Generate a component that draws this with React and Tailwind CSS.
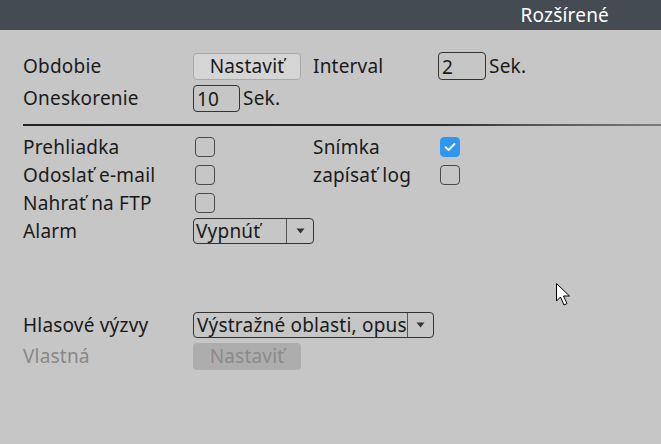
import React from "react";

const Check = ({ checked }) => (
  <div
    className={
      "w-[20px] h-[20px] rounded-[4px] flex items-center justify-center " +
      (checked ? "bg-[#2f97ef] border border-[#2f97ef]" : "border border-[#4a4a4a]")
    }
  >
    {checked && (
      <svg width="12" height="10" viewBox="0 0 12 10">
        <path d="M1.5 5.2 L4.6 8 L10.5 2" fill="none" stroke="white" strokeWidth="1.8" strokeLinecap="round" strokeLinejoin="round" />
      </svg>
    )}
  </div>
);

const Arrow = () => (
  <svg width="9" height="6" viewBox="0 0 9 6">
    <path d="M0.5 0.5 L8.5 0.5 L4.5 5.5 Z" fill="#333" />
  </svg>
);

const Row = ({ children, className = "" }) => (
  <div className={"grid grid-cols-[170px_120px_125px_1fr] items-center h-[28px] " + className}>{children}</div>
);

export default function App() {
  return (
    <div
      className="relative w-[661px] h-[444px] bg-[#c6c6c6] overflow-hidden text-[#1a1a1a] text-[19px] tracking-[0.2px] leading-none"
      style={{ fontFamily: '"Noto Sans", "Open Sans", sans-serif' }}
    >
      <div className="h-[30px] bg-[#444b53] flex items-center justify-end pr-[52px]">
        <span className="text-white text-[19px] tracking-[0.2px]">Rozšírené</span>
      </div>

      <div className="pl-[23px] pt-[22px]">
        <Row>
          <span>Obdobie</span>
          <div className="w-[108px] h-[27px] rounded-[4px] bg-[#d5d5d5] border border-[#a9a9a9] flex items-center justify-center">
            Nastaviť
          </div>
          <span>Interval</span>
          <div className="flex items-center">
            <div className="w-[48px] h-[28px] rounded-[4px] border border-[#333] flex items-center pl-[3px] pt-[2px]">2</div>
            <span className="ml-[3px]">Sek.</span>
          </div>
        </Row>
        <Row className="mt-[4px]">
          <span>Oneskorenie</span>
          <div className="flex items-center">
            <div className="w-[47px] h-[27px] rounded-[4px] border border-[#333] flex items-center pl-[3px] pt-[2px]">10</div>
            <span className="ml-[3px]">Sek.</span>
          </div>
        </Row>

        <div className="mt-[12px] h-[2px] bg-[linear-gradient(to_right,#222_0%,#2a2a2a_65%,#555_80%,#7a7a7a_100%)]" />

        <div className="mt-[7px]">
          <Row>
            <span>Prehliadka</span>
            <div className="pl-[2px]"><Check /></div>
            <span>Snímka</span>
            <div className="pl-[2px]"><Check checked /></div>
          </Row>
          <Row>
            <span>Odoslať e-mail</span>
            <div className="pl-[2px]"><Check /></div>
            <span>zapísať log</span>
            <div className="pl-[2px]"><Check /></div>
          </Row>
          <Row>
            <span>Nahrať na FTP</span>
            <div className="pl-[2px]"><Check /></div>
          </Row>
          <Row>
            <span>Alarm</span>
            <div className="w-[121px] h-[26px] rounded-[4px] border border-[#333] flex items-stretch">
              <div className="flex-1 flex items-center pl-[2px]">Vypnúť</div>
              <div className="w-[27px] border-l border-[#555] flex items-center justify-center"><Arrow /></div>
            </div>
          </Row>
        </div>

        <Row className="mt-[66px]">
          <span>Hlasové výzvy</span>
          <div className="col-span-3">
            <div className="w-[241px] h-[26px] rounded-[4px] border border-[#333] flex items-stretch">
              <div className="w-[213px] overflow-hidden whitespace-nowrap flex items-center pl-[3px]">Výstražné oblasti, opus</div>
              <div className="flex-1 border-l border-[#555] flex items-center justify-center"><Arrow /></div>
            </div>
          </div>
        </Row>
        <Row className="mt-[3px]">
          <span className="text-[#888]">Vlastná</span>
          <div className="w-[108px] h-[27px] rounded-[4px] bg-[#adadad] flex items-center justify-center text-[#8a8a8a]">
            Nastaviť
          </div>
        </Row>
      </div>

      <svg className="absolute left-[556px] top-[283px]" width="16" height="25" viewBox="0 0 16 25">
        <path d="M0.5 0.5 L0.5 18 L4.5 14 L8 22 L11 20.5 L7.5 13 L13.5 13 Z" fill="white" stroke="black" strokeWidth="1" />
      </svg>
    </div>
  );
}
